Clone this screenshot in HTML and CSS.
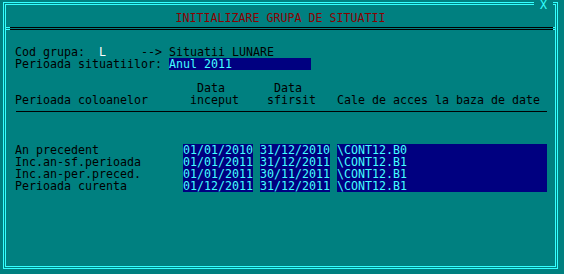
FILE: index.html
```html
<!DOCTYPE html>
<html lang="ro">
<head>
    <meta charset="UTF-8">
    <meta name="viewport" content="width=device-width, initial-scale=1.0">
    <title>Initializare grupa de situatii</title>
    <link rel="stylesheet" href="styles.css">
</head>
<body>

    <div class="screen">
        <div class="frame">
            <span class="close">X</span>
            <div class="title">INITIALIZARE GRUPA DE SITUATII</div>
            <div class="sep">
                <div class="sep-cap"></div>
                <div class="sep-line"></div>
                <div class="sep-cap right"></div>
            </div>

            <div class="form">
                <div class="row">Cod grupa:  <span class="key">L</span>     --&gt; Situatii LUNARE</div>
                <div class="row">Perioada situatiilor: <span class="field">Anul 2011</span></div>
                <div class="row"></div>
                <div class="row">                          Data       Data</div>
                <div class="row">Perioada coloanelor      inceput    sfirsit   Cale de acces la baza de date</div>
                <div class="rule"></div>

                <!-- perioadele coloanelor -->
                <div class="data">
                    <div class="data-row">
                        <div class="label">An precedent</div>
                        <div class="cell date">01/01/2010</div>
                        <div class="cell date">31/12/2010</div>
                        <div class="cell path">\CONT12.B0</div>
                    </div>
                    <div class="data-row">
                        <div class="label">Inc.an-sf.perioada</div>
                        <div class="cell date">01/01/2011</div>
                        <div class="cell date">31/12/2011</div>
                        <div class="cell path">\CONT12.B1</div>
                    </div>
                    <div class="data-row">
                        <div class="label">Inc.an-per.preced.</div>
                        <div class="cell date">01/01/2011</div>
                        <div class="cell date">30/11/2011</div>
                        <div class="cell path">\CONT12.B1</div>
                    </div>
                    <div class="data-row">
                        <div class="label">Perioada curenta</div>
                        <div class="cell date">01/12/2011</div>
                        <div class="cell date">31/12/2011</div>
                        <div class="cell path">\CONT12.B1</div>
                    </div>
                </div>
            </div>
        </div>
    </div>

</body>
</html>
```

FILE: styles.css
```css
body {
    margin: 0;
    background-color: #008080;
    font-family: "DejaVu Sans Mono", monospace;
    font-size: 11.63px;
    line-height: 12px;
    color: #000;
}
.screen {
    padding: 2px 6px 5px 3px;
}
.frame {
    position: relative;
    height: 267px;
    box-sizing: border-box;
    border: 3px double #33ffff;
}
.close {
    position: absolute;
    top: -5px;
    left: 528px;
    width: 19px;
    height: 10px;
    line-height: 10px;
    text-align: center;
    background-color: #008080;
    color: #33ffff;
}
.title {
    padding-top: 7px;
    height: 12px;
    text-align: center;
    color: #8b0000;
}
.sep {
    display: flex;
    height: 3px;
    margin-top: 3px;
}
.sep-cap {
    width: 4px;
    box-sizing: border-box;
    border-top: 1px solid #33ffff;
    border-bottom: 1px solid #33ffff;
}
.sep-cap.right {
    width: 2px;
}
.sep-line {
    flex: 1;
    box-sizing: border-box;
    border-top: 1px solid #000;
    border-bottom: 1px solid #000;
}
.form {
    margin-top: 16px;
    padding-left: 9px;
}
.row {
    height: 12px;
    white-space: pre;
}
.key {
    color: #fff;
}
.field {
    display: inline-block;
    width: 142px;
    height: 12px;
    vertical-align: top;
    background-color: #000080;
    color: #44ffff;
}
.rule {
    width: 531px;
    height: 1px;
    margin: 5px 0 0 1px;
    background-color: #000;
}
.data {
    margin-top: 32px;
}
.data-row {
    display: flex;
    height: 12px;
    white-space: pre;
}
.label {
    width: 168px;
}
.cell {
    background-color: #000080;
    color: #44ffff;
}
.cell + .cell {
    margin-left: 7px;
}
.date {
    width: 70px;
}
.path {
    width: 210px;
}
```
